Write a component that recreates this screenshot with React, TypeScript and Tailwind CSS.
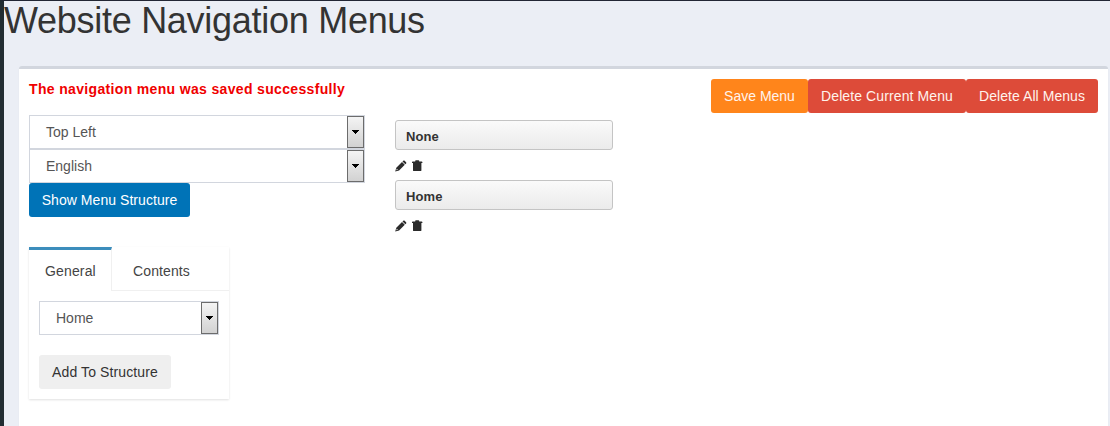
import React from "react";

function Select({ value, className }: { value: string; className: string }) {
  return (
    <div className={`flex h-[34px] items-stretch border border-[#d2d6de] bg-white ${className}`}>
      <span className="flex-1 pl-4 leading-8 text-[#555]">{value}</span>
      <span className="flex w-[17px] items-center justify-center border border-[#6c6c6c] bg-linear-to-b from-[#f4f4f4] to-[#d2d2d2]">
        <svg width="7" height="4" viewBox="0 0 7 4" shapeRendering="crispEdges">
          <path d="M0 0h7v1H6v1H5v1H4v1H3V3H2V2H1V1H0z" fill="#000" />
        </svg>
      </span>
    </div>
  );
}

function MenuItem({ label }: { label: string }) {
  return (
    <div className="h-[60px]">
      <div className="h-[30px] w-[218px] rounded-[3px] border border-[#c4c4c4] bg-linear-to-b from-[#fafafa] to-[#ebebeb] pl-[10px] text-[13px] leading-[31px] font-bold tracking-[0.1px] text-[#333]">
        {label}
      </div>
      <div className="flex gap-[5px] pt-[10px] text-[#2b2b2b]">
        <svg width="12" height="12" viewBox="0 0 12 12" fill="currentColor">
          <path d="M8.300.7c.4-.4.9-.4 1.300 0l1.500 1.500c.4.4.4.9 0 1.300l-.8.8L7.500 1.500z" />
          <path d="M7 2l2.800 2.800-5.700 5.700L.2 11.500l1.100-3.800zM1.800 8.700l-.5 1.600 1.600-.5z" fillRule="evenodd" />
        </svg>
        <svg width="11" height="12" viewBox="0 0 11 12" fill="currentColor">
          <path d="M0 2.200q0-.8.800-.8h2.400V1q0-.7.700-.7h2.600q.7 0 .7.700v.4h2.400q.8 0 .8.800V3H0z" />
          <path d="M1 2.900h8.400v7.300q0 .9-.9.900H1.900q-.9 0-.9-.9z" />
        </svg>
      </div>
    </div>
  );
}

const button = "h-[34px] rounded-[3px] px-[12px] text-[14px] leading-[34px] whitespace-nowrap";

export default function App() {
  return (
    <div className="flex h-[426px] flex-col overflow-hidden border-t border-l-4 border-t-[#222634] border-l-[#222d32] bg-[#ebeef5] font-['Liberation_Sans',Arial,sans-serif] text-[14px] text-[#333]">
      <h1 className="h-[65px] text-[36px] leading-[40px] tracking-[-0.28px] whitespace-nowrap">Website Navigation Menus</h1>
      <main className="mr-[2px] ml-[15px] flex-1 rounded-t-[3px] border-t-[3px] border-[#d2d6de] bg-white px-[10px] shadow-[0_1px_1px_rgba(0,0,0,0.1)]">
        <div className="flex h-[46px] items-start justify-between pt-[10px]">
          <p className="text-[14px] leading-5 font-bold tracking-[0.34px] whitespace-nowrap text-[#f00000]">The navigation menu was saved successfully</p>
          <div className="flex text-[#fff3ec]">
            <button className={`${button} w-[97px] bg-[#ff851b]`}>Save Menu</button>
            <button className={`${button} w-[158px] bg-[#dd4b39] tracking-[0.1px]`}>Delete Current Menu</button>
            <button className={`${button} w-[132px] bg-[#dd4b39] tracking-[0.06px]`}>Delete All Menus</button>
          </div>
        </div>
        <div className="flex gap-[30px]">
          <div className="w-[336px]">
            <Select value="Top Left" className="w-[336px]" />
            <Select value="English" className="w-[336px]" />
            <button className={`${button} block w-[161px] bg-[#0073b7] tracking-[0.05px] text-white`}>Show Menu Structure</button>
            <section className="mt-[30px] w-[200px] bg-white shadow-[0_1px_2px_rgba(0,0,0,0.12)]">
              <div className="flex h-[44px]">
                <div className="w-[83px] border-t-[3px] border-r border-t-[#3c8dbc] border-r-[#f0f0f0] pl-4 leading-[42px] tracking-[0.15px] text-[#444]">General</div>
                <div className="flex-1 border-b border-[#f0f0f0] pl-[21px] leading-[48px] tracking-[0.12px] text-[#444]">Contents</div>
              </div>
              <div className="h-[108px] p-[10px]">
                <Select value="Home" className="w-[180px]" />
                <button className={`${button} mt-5 block w-[132px] bg-[#efefef] tracking-[0.12px] text-[#333]`}>Add To Structure</button>
              </div>
            </section>
          </div>
          <div className="pt-[5px]">
            <MenuItem label="None" />
            <MenuItem label="Home" />
          </div>
        </div>
      </main>
    </div>
  );
}
